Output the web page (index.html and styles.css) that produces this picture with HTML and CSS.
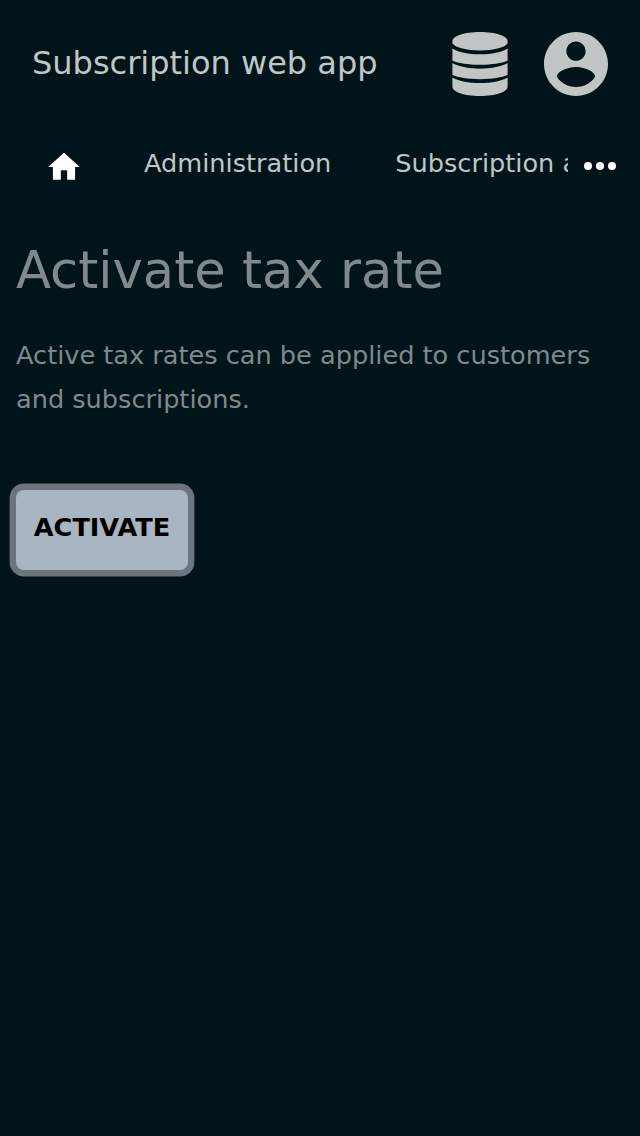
FILE: index.html
```html
<!DOCTYPE html>
<html lang="en">
<head>
<meta charset="utf-8">
<title>Activate tax rate</title>
<link rel="stylesheet" href="styles.css">
</head>
<body>
<header class="topbar">
  <div class="brand">Subscription web app</div>
  <svg class="icon-db" viewBox="0 0 56 64"><path d="M.4 9.200C.4 4 12.500 0 28 0S55.600 4 55.600 9.200v2.300C52 15.800 42 18.400 28 18.400S4 15.800.4 11.500z"/><path d="M.4 16.400C6 20 16.500 22.300 28 22.300s22-2.300 27.600-5.900v12.400C50 31.200 40 32.800 28 32.800S6 31.200.4 28.800z"/><path d="M.4 31C6 34.400 16.500 36.700 28 36.700s22-2.300 27.600-5.700v12.100C50 45.500 40 47.200 28 47.200S6 45.500.4 43.100z"/><path d="M.4 45.400C6 48.900 16.500 51.100 28 51.100s22-2.200 27.600-5.700v9.100C55.600 60 43.500 64 28 64S.4 60 .4 54.500z"/></svg>
  <svg class="icon-user" viewBox="2 2 20 20"><path d="M12 2C6.480 2 2 6.480 2 12s4.480 10 10 10 10-4.480 10-10S17.520 2 12 2zm0 3c1.660 0 3 1.340 3 3s-1.340 3-3 3-3-1.340-3-3 1.340-3 3-3zm0 14.200c-2.500 0-4.710-1.280-6-3.220.03-1.990 4-3.080 6-3.080 1.990 0 5.970 1.090 6 3.080-1.290 1.940-3.500 3.220-6 3.220z"/></svg>
</header>
<nav class="nav">
  <svg class="icon-home" viewBox="0 0 24 24"><path d="M10 20v-6h4v6h5v-8h3L12 3 2 12h3v8z"/></svg>
  <a class="admin">Administration</a>
  <a class="clipped">Subscription administration</a>
  <svg class="icon-more" viewBox="0 0 32 8"><circle cx="4" cy="4" r="4"/><circle cx="16" cy="4" r="4"/><circle cx="28" cy="4" r="4"/></svg>
</nav>
<main class="content">
  <h1 class="title">Activate tax rate</h1>
  <p class="text">Active tax rates can be applied to customers and subscriptions.</p>
  <button class="activate">ACTIVATE</button>
</main>
</body>
</html>
```
FILE: styles.css
```css
* { box-sizing: border-box; }
body { margin: 0; min-height: 1136px; background: #001419; font-family: "DejaVu Sans", sans-serif; color: #c0c6c6; }
.topbar { display: flex; align-items: center; height: 128px; padding: 0 32px; }
.brand { flex: 1; padding-bottom: 2px; font-size: 32px; line-height: 40px; white-space: nowrap; }
.icon-db { width: 56px; height: 64px; margin-right: 36px; fill: #c0c6c6; }
.icon-user { width: 64px; height: 64px; fill: #c0c6c6; }
.nav { display: flex; align-items: center; height: 72px; padding: 0 24px 2px 45px; font-size: 25.600px; line-height: 40px; white-space: nowrap; }
.icon-home { width: 38px; height: 38px; margin: 7px 61px 0 0; fill: #fff; }
.admin { margin-right: 64px; }
.clipped { flex: 1; min-width: 0; overflow: hidden; }
.icon-more { width: 32px; height: 8px; margin: 6px 0 0 16px; fill: #fff; }
.content { padding: 36px 16px 0; color: #80898b; }
.title { margin: 0; font-size: 51.200px; font-weight: 400; line-height: 68px; }
.text { margin: 29px 0 0; font-size: 25.600px; line-height: 44px; }
.activate { display: block; width: 172px; height: 80px; margin: 69px 0 0; padding: 0 0 6px; border: 0; border-radius: 8px; background: #a9b5c1; box-shadow: 0 0 0 6.400px #6c757d; color: #000; font: bold 25.600px "DejaVu Sans", sans-serif; }
```
